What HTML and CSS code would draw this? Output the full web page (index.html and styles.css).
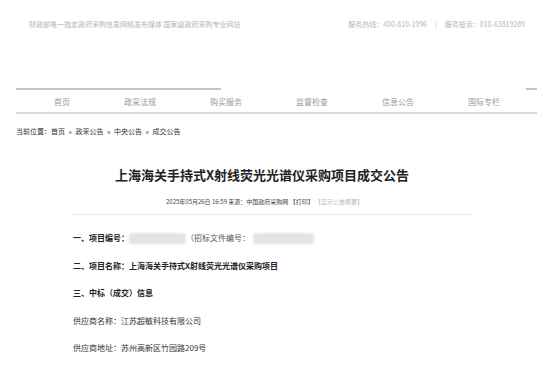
FILE: index.html
```html
<!DOCTYPE html>
<html lang="zh-CN">
  <head>
    <meta charset="UTF-8" />
    <meta name="viewport" content="width=device-width,initial-scale=1.0" />
    <title>成交公告</title>
    <link rel="stylesheet" href="styles.css">
  </head>
  <body>
    <div class="topbar">
      <span>财政部唯一指定政府采购信息网络发布媒体 国家级政府采购专业网站</span>
      <span>服务热线：400-810-1996<span class="sep">|</span>服务投诉：010-63819289</span>
    </div>

    <div class="nav-wrap">
      <div class="nav-top">
        <div class="bar-long"></div>
        <div class="bar-short"></div>
      </div>
      <nav>
        <a href="">首页</a>
        <a href="">政采法规</a>
        <a href="">购买服务</a>
        <a href="">监督检查</a>
        <a href="">信息公告</a>
        <a href="">国际专栏</a>
      </nav>
    </div>

    <div class="crumb">当前位置：首页 » 政采公告 » 中央公告 » 成交公告</div>

    <div class="article">
      <h1 class="title">上海海关手持式X射线荧光光谱仪采购项目成交公告</h1>
      <div class="meta">
        2025年05月26日 16:59 来源：中国政府采购网 【打印】 <span class="summary">【显示公告概要】</span>
      </div>

      <div class="content">
        <div class="row bold">
          一、项目编号：<span class="blur w1"></span><span class="normal">（招标文件编号：</span><span class="blur w2"></span>
        </div>
        <div class="row bold">二、项目名称：上海海关手持式X射线荧光光谱仪采购项目</div>
        <div class="row bold">三、中标（成交）信息</div>
        <div class="row">供应商名称：江苏超敏科技有限公司</div>
        <div class="row">供应商地址：苏州高新区竹园路209号</div>
      </div>
    </div>
  </body>
</html>
```

FILE: styles.css
```css
* {
  padding: 0;
  margin: 0;
  box-sizing: border-box;
  font-family: 'Noto Sans CJK SC', 'Noto Sans', sans-serif;
}
body {
  background: #fff;
  color: #333;
}
.topbar {
  height: 48px;
  padding: 0 29px;
  display: flex;
  justify-content: space-between;
  align-items: center;
  font-size: 7px;
  color: #b4b4b4;
}
.sep {
  margin: 0 8px;
}
.nav-wrap {
  margin: 40px 17px 0 16px;
}
.nav-top {
  display: flex;
  justify-content: space-between;
}
.bar-long {
  width: 205px;
  height: 2px;
  background: #c4c4c4;
}
.bar-short {
  width: 11px;
  height: 2px;
  background: #c4c4c4;
}
nav {
  height: 24px;
  padding-left: 38px;
  display: flex;
  align-items: center;
  gap: 54px;
  border-bottom: 2px solid #dadada;
}
a {
  text-decoration: none;
  font-size: 8px;
  color: #999;
}
.crumb {
  margin: 11px 0 0 16px;
  font-size: 7px;
  line-height: 12px;
  word-spacing: 2px;
  color: #333;
}
.article {
  margin-left: 73px;
  width: 398px;
}
.title {
  margin-top: 28px;
  padding-right: 20px;
  text-align: center;
  font-size: 13px;
  line-height: 20px;
  font-weight: 700;
  color: #222;
}
.meta {
  margin-top: 12px;
  padding: 0 15px 7px 0;
  text-align: center;
  font-size: 6px;
  line-height: 10px;
  color: #444;
  border-bottom: 1px solid #e8e8e8;
}
.summary {
  color: #bbb;
}
.content {
  padding-top: 17px;
  display: flex;
  flex-direction: column;
  gap: 15.5px;
}
.row {
  display: flex;
  align-items: center;
  font-size: 8px;
  line-height: 12px;
  color: #333;
}
.bold {
  font-weight: 700;
  color: #222;
}
.normal {
  font-weight: 400;
  color: #555;
}
.blur {
  display: inline-block;
  height: 11px;
  border-radius: 3px;
  background: #e4e4e4;
  filter: blur(1.2px);
}
.w1 {
  width: 57px;
}
.w2 {
  width: 61px;
  margin-left: 3px;
}
```
